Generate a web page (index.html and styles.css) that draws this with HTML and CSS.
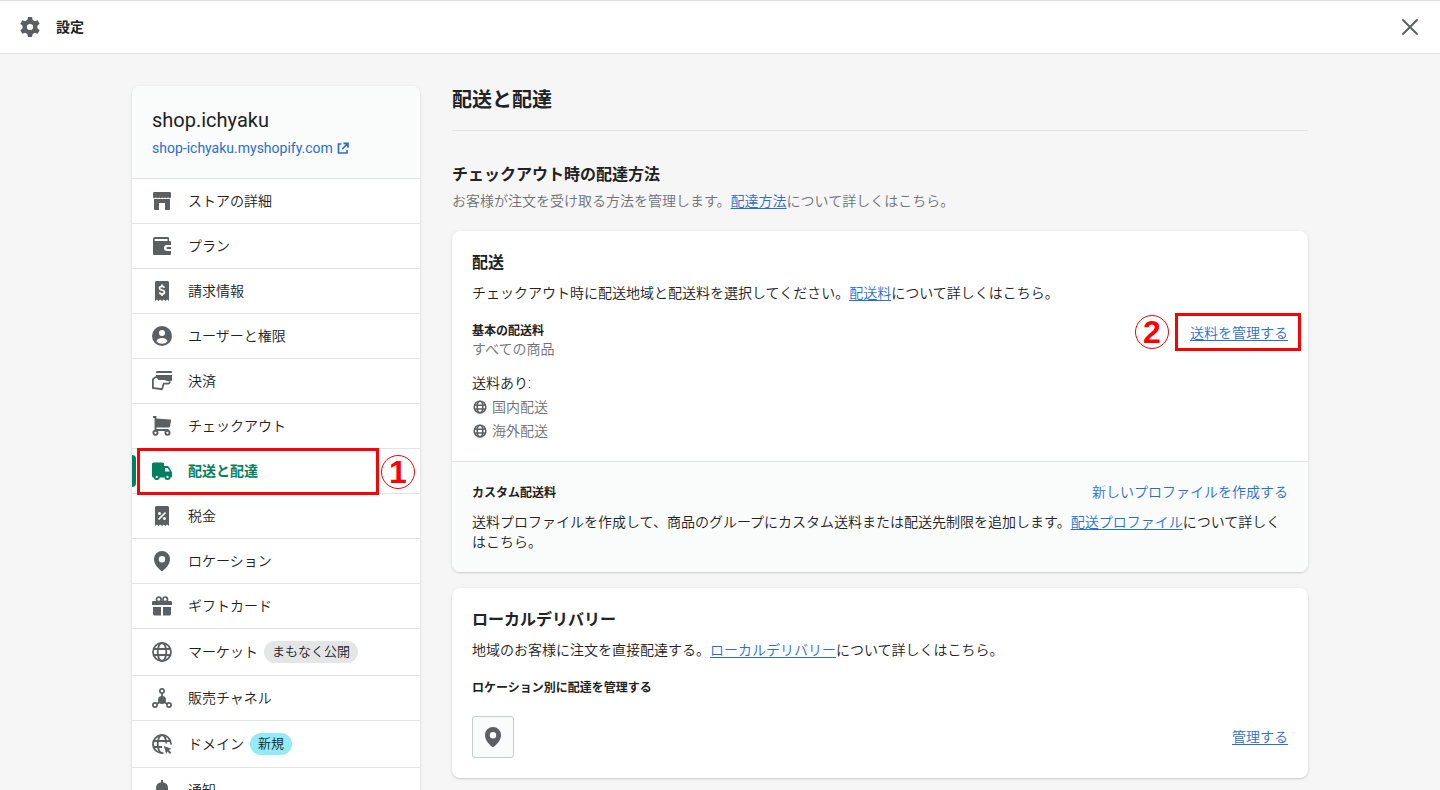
FILE: index.html
```html
<!DOCTYPE html>
<html lang="ja">
<head>
    <meta charset="UTF-8">
    <meta name="viewport" content="width=device-width, initial-scale=1.0">
    <title>設定</title>
    <link rel="stylesheet" href="styles.css">
</head>
<body>
    <svg class="sprite" aria-hidden="true">
        <symbol id="i-gear" viewBox="0 0 20 20">
            <circle cx="10" cy="10" r="5.3" fill="none" stroke="currentColor" stroke-width="4.4"/>
            <path d="M8 0h4l1 4.5H7z"/>
            <path d="M8 0h4l1 4.5H7z" transform="rotate(60 10 10)"/>
            <path d="M8 0h4l1 4.5H7z" transform="rotate(120 10 10)"/>
            <path d="M8 0h4l1 4.5H7z" transform="rotate(180 10 10)"/>
            <path d="M8 0h4l1 4.5H7z" transform="rotate(240 10 10)"/>
            <path d="M8 0h4l1 4.5H7z" transform="rotate(300 10 10)"/>
        </symbol>
        <symbol id="i-store" viewBox="0 0 20 20">
            <path d="M2.5 1h15A1.5 1.5 0 0 1 19 2.3v3.2a1.5 1.5 0 0 1-3 .3 1.5 1.5 0 0 1-3 0 1.5 1.5 0 0 1-3 0 1.5 1.5 0 0 1-3 0 1.5 1.5 0 0 1-3 0 1.5 1.5 0 0 1-3-.3V2.3A1.5 1.5 0 0 1 2.5 1z"/>
            <path d="M2 8h16v10a1 1 0 0 1-1 1h-4v-7H7v7H3a1 1 0 0 1-1-1z"/>
        </symbol>
        <symbol id="i-wallet" viewBox="0 0 20 20">
            <path fill-rule="evenodd" d="M3 1h13a1 1 0 0 1 1 1v3h1a1 1 0 0 1 1 1v3h-4a3 3 0 0 0 0 6h4v3a1 1 0 0 1-1 1H2a1 1 0 0 1-1-1V3a2 2 0 0 1 2-2zM3.5 3a1 1 0 0 0 0 2h12V3zM15.500 11H19v2h-3.500a1 1 0 0 1 0-2z"/>
        </symbol>
        <symbol id="i-bill" viewBox="0 0 20 20">
            <path d="M4.5 0h11A1.5 1.5 0 0 1 17 1.5V20l-1.8-1.4-1.7 1.4-1.7-1.4L10 20l-1.8-1.4L6.500 20l-1.700-1.400L3 20V1.500A1.500 1.500 0 0 1 4.500 0z"/>
            <path d="M12.4 6.8C12 5.7 11.1 5.3 10 5.3c-1.400 0-2.500.7-2.500 1.900 0 2.600 5 1.200 5 3.900 0 1.200-1.100 2-2.500 2-1.300 0-2.200-.6-2.600-1.700M10 3.500v1.800M10 13v1.900" fill="none" stroke="#fff" stroke-width="1.7"/>
        </symbol>
        <symbol id="i-tax" viewBox="0 0 20 20">
            <path d="M4.5 0h11A1.5 1.5 0 0 1 17 1.5V20l-1.8-1.4-1.7 1.4-1.7-1.4L10 20l-1.8-1.4L6.500 20l-1.700-1.400L3 20V1.500A1.500 1.500 0 0 1 4.500 0z"/>
            <path d="M13.5 6.5l-7 7" stroke="#fff" stroke-width="1.7"/>
            <circle cx="7.5" cy="7.5" r="1.5" fill="#fff"/>
            <circle cx="12.5" cy="12.5" r="1.5" fill="#fff"/>
        </symbol>
        <symbol id="i-user" viewBox="0 0 20 20">
            <circle cx="10" cy="10" r="10"/>
            <circle cx="10" cy="7" r="3" fill="#fff"/>
            <path d="M4.4 15.2C5.2 13 7.4 12 10 12s4.800 1 5.600 3.200A7.600 7.600 0 0 1 10 17.800a7.600 7.600 0 0 1-5.600-2.600z" fill="#fff"/>
        </symbol>
        <symbol id="i-pay" viewBox="0 0 20 20">
            <path d="M5.2 0H19a1 1 0 0 1 1 1v1H4v-.8A1.2 1.2 0 0 1 5.2 0z"/>
            <path d="M4 4h16v4.800a1.500 1.500 0 0 1-1.500 1.500H16L12.500 9H6.500L4 6z"/>
            <path d="M5 5.500L1.900 7.200A2 2 0 0 0 .9 9v8l8.900 1.200c1.200-1.400.9-3.700 2-5.600H16a1.700 1.700 0 0 0 1.700-2" fill="none" stroke="currentColor" stroke-width="1.8"/>
        </symbol>
        <symbol id="i-cart" viewBox="0 0 20 20">
            <path d="M4 2.5l14.3 1a.9.9 0 0 1 .8 1l-1.2 6.2a1 1 0 0 1-1 .8H4z"/>
            <path d="M1 1h2.500v13h13" fill="none" stroke="currentColor" stroke-width="1.9"/>
            <circle cx="3.500" cy="16.800" r="2.100" fill="#fff" stroke="currentColor" stroke-width="1.9"/>
            <circle cx="15.500" cy="16.800" r="2.100" fill="#fff" stroke="currentColor" stroke-width="1.9"/>
        </symbol>
        <symbol id="i-truck" viewBox="0 0 20 20">
            <path fill-rule="evenodd" d="M1.500 1.500h9A1.500 1.500 0 0 1 12 3v2h3.200a2 2 0 0 1 1.700 1l2.600 4.300a3 3 0 0 1 .5 1.500V15a1.500 1.500 0 0 1-1.500 1.500H1.500A1.500 1.500 0 0 1 0 15V3a1.500 1.500 0 0 1 1.500-1.500zM13 7v3.500h4.800L15.700 7z"/>
            <circle cx="4.700" cy="16" r="2.100" fill="#fff" stroke="currentColor" stroke-width="1.9"/>
            <circle cx="15.500" cy="16" r="2.100" fill="#fff" stroke="currentColor" stroke-width="1.9"/>
        </symbol>
        <symbol id="i-pin" viewBox="0 0 20 20">
            <path fill-rule="evenodd" d="M10 0a8 8 0 0 0-8 7.900C2 13.500 6.500 17.500 9.200 19.700a1.300 1.300 0 0 0 1.600 0C13.500 17.500 18 13.500 18 7.900A8 8 0 0 0 10 0zm0 5a3.200 3.200 0 1 1 0 6.400A3.200 3.200 0 0 1 10 5z"/>
        </symbol>
        <symbol id="i-gift" viewBox="0 0 20 20">
            <circle cx="6.800" cy="3.400" r="2.300" fill="none" stroke="currentColor" stroke-width="1.7"/>
            <circle cx="13.200" cy="3.400" r="2.300" fill="none" stroke="currentColor" stroke-width="1.7"/>
            <path d="M1.200 5h17.600A1.200 1.200 0 0 1 20 6.200V9H0V6.200A1.200 1.200 0 0 1 1.200 5zM1 11h8v8.500H2.500A1.500 1.500 0 0 1 1 18zM11 11h8v7a1.500 1.500 0 0 1-1.500 1.500H11z"/>
        </symbol>
        <symbol id="i-globe" viewBox="0 0 20 20">
            <g fill="none" stroke="currentColor" stroke-width="1.8">
                <circle cx="10" cy="10" r="9"/>
                <ellipse cx="10" cy="10" rx="4.300" ry="9"/>
                <path d="M1.500 7h17M1.500 13h17"/>
            </g>
        </symbol>
        <symbol id="i-globe-small" viewBox="0 0 16 16">
            <g fill="none" stroke="currentColor" stroke-width="1.5">
                <circle cx="8" cy="8" r="5.800"/>
                <ellipse cx="8" cy="8" rx="2.800" ry="5.800"/>
                <path d="M2.500 6.200h11M2.500 10h11"/>
            </g>
        </symbol>
        <symbol id="i-channels" viewBox="0 0 20 20">
            <g fill="none" stroke="currentColor" stroke-width="1.7">
                <path d="M10 5v6M10 12l-5 4M10 12l5 4"/>
                <circle cx="10" cy="3" r="2.100" fill="#fff"/>
                <circle cx="3" cy="17" r="2.100" fill="#fff"/>
                <circle cx="17" cy="17" r="2.100" fill="#fff"/>
            </g>
            <circle cx="10" cy="12" r="4"/>
        </symbol>
        <symbol id="i-domain" viewBox="0 0 20 20">
            <g fill="none" stroke="currentColor" stroke-width="1.8">
                <path d="M19 10.500a9 9 0 1 0-7.500 8.400"/>
                <path d="M14.300 9.500C14.200 4.900 12.300 1 10 1S5.700 5 5.700 10s1.900 9 4.300 9M1.500 7h17M1.500 13H10"/>
            </g>
            <path d="M11.800 12l7.700 2.700-2.700 1.400 2.500 2.500-1.300 1.300-2.500-2.500-1.200 2.600z"/>
        </symbol>
        <symbol id="i-bell" viewBox="0 0 20 20">
            <path d="M9 0h2v2.200A6 6 0 0 1 16 8v4l2 2v2H2v-2l2-2V8a6 6 0 0 1 5-5.800zM7.500 17h5a2.500 2.500 0 0 1-5 0z"/>
        </symbol>
        <symbol id="i-external" viewBox="0 0 12 12">
            <path d="M4.500 2H1.500v9H10V8M6.500 1.300H11v4.500M10.600 1.700L5.300 7" fill="none" stroke="currentColor" stroke-width="1.7"/>
        </symbol>
        <symbol id="i-close" viewBox="0 0 20 20">
            <path d="M3 3l14 14M17 3L3 17" fill="none" stroke="currentColor" stroke-width="1.9" stroke-linecap="round"/>
        </symbol>
    </svg>

    <div class="settings">
        <header class="topbar">
            <svg class="icon"><use href="#i-gear"/></svg>
            <h2 class="topbar-title">設定</h2>
            <button class="close-btn" type="button" aria-label="閉じる">
                <svg class="icon"><use href="#i-close"/></svg>
            </button>
        </header>

        <div class="scroll-area">
            <div class="layout">
                <aside class="sidebar">
                    <div class="store">
                        <p class="store-name">shop.ichyaku</p>
                        <a class="store-link" href="#">shop-ichyaku.myshopify.com
                            <svg class="external-icon"><use href="#i-external"/></svg>
                        </a>
                    </div>
                    <nav>
                        <ul class="menu">
                            <li><a class="menu-item" href="#"><svg class="icon"><use href="#i-store"/></svg>ストアの詳細</a></li>
                            <li><a class="menu-item" href="#"><svg class="icon"><use href="#i-wallet"/></svg>プラン</a></li>
                            <li><a class="menu-item" href="#"><svg class="icon"><use href="#i-bill"/></svg>請求情報</a></li>
                            <li><a class="menu-item" href="#"><svg class="icon"><use href="#i-user"/></svg>ユーザーと権限</a></li>
                            <li><a class="menu-item" href="#"><svg class="icon"><use href="#i-pay"/></svg>決済</a></li>
                            <li><a class="menu-item" href="#"><svg class="icon"><use href="#i-cart"/></svg>チェックアウト</a></li>
                            <li class="active">
                                <a class="menu-item" href="#"><svg class="icon"><use href="#i-truck"/></svg>配送と配達</a>
                                <span class="mark mark-menu"></span>
                                <span class="step step-menu">1</span>
                            </li>
                            <li><a class="menu-item" href="#"><svg class="icon"><use href="#i-tax"/></svg>税金</a></li>
                            <li><a class="menu-item" href="#"><svg class="icon"><use href="#i-pin"/></svg>ロケーション</a></li>
                            <li><a class="menu-item" href="#"><svg class="icon"><use href="#i-gift"/></svg>ギフトカード</a></li>
                            <li><a class="menu-item" href="#"><svg class="icon"><use href="#i-globe"/></svg><span class="label">マーケット<span class="badge">まもなく公開</span></span></a></li>
                            <li><a class="menu-item" href="#"><svg class="icon"><use href="#i-channels"/></svg>販売チャネル</a></li>
                            <li><a class="menu-item" href="#"><svg class="icon"><use href="#i-domain"/></svg><span class="label">ドメイン<span class="badge badge-new">新規</span></span></a></li>
                            <li><a class="menu-item" href="#"><svg class="icon"><use href="#i-bell"/></svg>通知</a></li>
                        </ul>
                    </nav>
                </aside>

                <main class="content">
                    <h1>配送と配達</h1>

                    <div class="section-head">
                        <h2>チェックアウト時の配達方法</h2>
                        <p class="subdued">お客様が注文を受け取る方法を管理します。<a href="#">配達方法</a>について詳しくはこちら。</p>
                    </div>

                    <section class="card">
                        <div class="card-section">
                            <h2>配送</h2>
                            <p class="intro">チェックアウト時に配送地域と配送料を選択してください。<a href="#">配送料</a>について詳しくはこちら。</p>
                            <div class="rates">
                                <div>
                                    <h3>基本の配送料</h3>
                                    <p class="subdued">すべての商品</p>
                                </div>
                                <div class="manage">
                                    <a href="#">送料を管理する</a>
                                    <span class="mark mark-manage"></span>
                                    <span class="step step-manage">2</span>
                                </div>
                            </div>
                            <p class="zones-title">送料あり:</p>
                            <ul class="zones">
                                <li><svg class="zone-icon"><use href="#i-globe-small"/></svg>国内配送</li>
                                <li><svg class="zone-icon"><use href="#i-globe-small"/></svg>海外配送</li>
                            </ul>
                        </div>
                        <div class="card-section card-footer">
                            <div class="row">
                                <h3>カスタム配送料</h3>
                                <a class="plain" href="#">新しいプロファイルを作成する</a>
                            </div>
                            <p>送料プロファイルを作成して、商品のグループにカスタム送料または配送先制限を追加します。<a href="#">配送プロファイル</a>について詳しくはこちら。</p>
                        </div>
                    </section>

                    <section class="card">
                        <div class="card-section">
                            <h2>ローカルデリバリー</h2>
                            <p class="intro">地域のお客様に注文を直接配達する。<a href="#">ローカルデリバリー</a>について詳しくはこちら。</p>
                            <h3 class="locations-title">ロケーション別に配達を管理する</h3>
                            <div class="row">
                                <span class="thumb"><svg class="icon"><use href="#i-pin"/></svg></span>
                                <a href="#">管理する</a>
                            </div>
                        </div>
                    </section>
                </main>
            </div>
        </div>
    </div>
</body>
</html>
```
FILE: styles.css
```css
* {
    margin: 0;
    padding: 0;
    box-sizing: border-box;
}

body {
    font-family: Roboto, "Noto Sans CJK JP", sans-serif;
    font-size: 14px;
    line-height: 20px;
    font-weight: 350;
    color: #202223;
    background: #f6f6f6;
}

ul {
    list-style: none;
}

a {
    color: #2c6ecb;
    text-underline-offset: 2px;
}

h1 {
    font-size: 20px;
    line-height: 28px;
    font-weight: 600;
}

h2 {
    font-size: 16px;
    line-height: 24px;
    font-weight: 600;
}

h3 {
    font-size: 12px;
    line-height: 16px;
    font-weight: 600;
}

.sprite {
    display: none;
}

.icon {
    display: block;
    flex: none;
    width: 20px;
    height: 20px;
    fill: currentColor;
    color: #5c5f62;
}

.subdued {
    color: #6d7175;
}

.settings {
    display: flex;
    flex-direction: column;
    height: 100vh;
}

/* top bar */
.topbar {
    display: flex;
    align-items: center;
    gap: 16px;
    padding: 16px 20px;
    background: #fff;
    border-top: 1px solid #dcdcdc;
    border-bottom: 1px solid #e1e3e5;
}

.topbar-title {
    font-size: 14px;
    line-height: 20px;
}

.close-btn {
    margin-left: auto;
    border: none;
    background: none;
    cursor: pointer;
}

.scroll-area {
    flex: 1;
    min-height: 0;
    overflow-y: auto;
    scrollbar-width: none;
}

.layout {
    display: flex;
    align-items: flex-start;
    gap: 32px;
    max-width: 1240px;
    margin: 0 auto;
    padding: 32px;
}

/* sidebar */
.sidebar {
    flex: 0 0 288px;
    background: #fff;
    border-radius: 8px;
    box-shadow: 0 0 5px rgba(23, 24, 24, 0.05), 0 1px 2px rgba(0, 0, 0, 0.15);
}

.store {
    padding: 20px;
    font-weight: 400;
    background: #fafbfb;
    border-radius: 8px 8px 0 0;
}

.store-name {
    font-size: 20px;
    line-height: 28px;
    margin-bottom: 4px;
}

.store-link {
    display: flex;
    align-items: center;
    gap: 4px;
    text-decoration: none;
}

.external-icon {
    width: 12px;
    height: 12px;
}

.menu li {
    position: relative;
    border-top: 1px solid #e1e3e5;
}

.menu-item {
    display: flex;
    align-items: center;
    gap: 16px;
    padding: 12px 20px;
    color: #202223;
    text-decoration: none;
}

.label {
    display: flex;
    align-items: center;
    gap: 6px;
}

.badge {
    padding: 1px 8px;
    font-size: 13px;
    border-radius: 11px;
    background: #e4e5e7;
}

.badge-new {
    background: #92ebf7;
}

.active .menu-item,
.active .icon {
    color: #008060;
    font-weight: 600;
}

.active::before {
    content: "";
    position: absolute;
    top: 6px;
    bottom: 6px;
    left: 0;
    width: 4px;
    background: #008060;
    border-radius: 0 4px 4px 0;
}

/* numbered red callouts */
.mark {
    position: absolute;
    border: 3px solid #f00;
    pointer-events: none;
}

.step {
    position: absolute;
    width: 34px;
    height: 34px;
    font-family: "Liberation Sans", sans-serif;
    font-size: 32px;
    line-height: 32px;
    font-weight: 700;
    text-align: center;
    color: #f00;
    border: 1px solid #f00;
    border-radius: 50%;
}

.mark-menu {
    top: -1px;
    bottom: -2px;
    left: 5px;
    right: 41px;
    z-index: 1;
}

.step-menu {
    top: 6px;
    right: 5px;
}

.mark-manage {
    top: -10px;
    bottom: -8px;
    left: -15px;
    right: -13px;
}

.step-manage {
    top: -8px;
    right: 119px;
}

/* main column */
.content {
    flex: 1;
    min-width: 0;
}

.content h1 {
    padding-bottom: 16px;
    border-bottom: 1px solid #e1e3e5;
}

.section-head {
    margin: 32px 0 20px;
}

.section-head h2 {
    margin-bottom: 4px;
}

.card {
    margin-bottom: 16px;
    background: #fff;
    border-radius: 8px;
    box-shadow: 0 0 5px rgba(23, 24, 24, 0.05), 0 1px 2px rgba(0, 0, 0, 0.15);
}

.card-section {
    padding: 20px;
}

.card-footer {
    background: #fafbfb;
    border-top: 1px solid #e1e3e5;
    border-radius: 0 0 8px 8px;
}

.intro {
    margin: 8px 0 20px;
}

.rates,
.row {
    display: flex;
    align-items: center;
    justify-content: space-between;
}

.rates {
    align-items: flex-start;
}

.manage {
    position: relative;
}

.zones-title {
    margin-top: 14px;
}

.zones li {
    display: flex;
    align-items: center;
    gap: 4px;
    margin-top: 4px;
    color: #6d7175;
}

.zone-icon {
    width: 16px;
    height: 16px;
    color: #5c5f62;
}

.card-footer .row {
    align-items: baseline;
    margin-bottom: 10px;
}

.plain {
    text-decoration: none;
}

.locations-title {
    margin-bottom: 20px;
}

.thumb {
    padding: 10px;
    background: #fafbfb;
    border: 1px solid #c9cccf;
    border-radius: 3px;
}
```
